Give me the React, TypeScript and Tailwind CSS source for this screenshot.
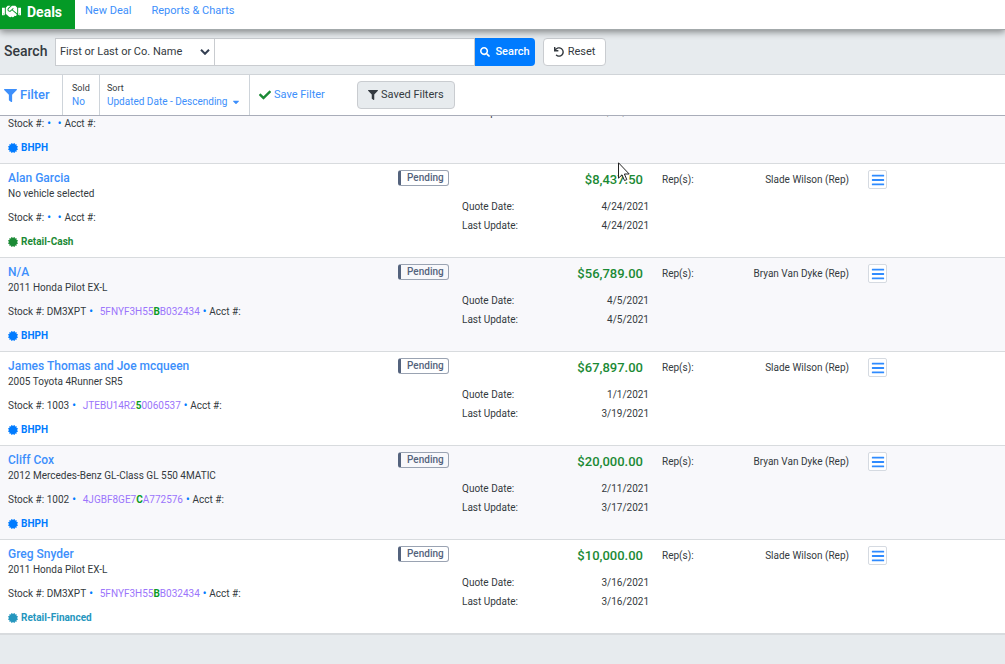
import { FaBars, FaCaretDown, FaCertificate, FaCheck, FaFilter, FaHandshake, FaSearch, FaUndo } from "react-icons/fa";

type Deal = {
    id: number;
    name: string;
    vehicle: string;
    stock: string;
    vin: string;
    type: "BHPH" | "Retail-Cash" | "Retail-Financed";
    amount: string;
    quoteDate?: string;
    lastUpdate: string;
    rep: string;
};

const deals: Deal[] = [
    { id: 1, name: "", vehicle: "", stock: "", vin: "", type: "BHPH", amount: "", lastUpdate: "4/29/2021", rep: "" },
    { id: 2, name: "Alan Garcia", vehicle: "No vehicle selected", stock: "", vin: "", type: "Retail-Cash", amount: "$8,437.50", quoteDate: "4/24/2021", lastUpdate: "4/24/2021", rep: "Slade Wilson (Rep)" },
    { id: 3, name: "N/A", vehicle: "2011 Honda Pilot EX-L", stock: "DM3XPT", vin: "5FNYF3H55BB032434", type: "BHPH", amount: "$56,789.00", quoteDate: "4/5/2021", lastUpdate: "4/5/2021", rep: "Bryan Van Dyke (Rep)" },
    { id: 4, name: "James Thomas and Joe mcqueen", vehicle: "2005 Toyota 4Runner SR5", stock: "1003", vin: "JTEBU14R250060537", type: "BHPH", amount: "$67,897.00", quoteDate: "1/1/2021", lastUpdate: "3/19/2021", rep: "Slade Wilson (Rep)" },
    { id: 5, name: "Cliff Cox", vehicle: "2012 Mercedes-Benz GL-Class GL 550 4MATIC", stock: "1002", vin: "4JGBF8GE7CA772576", type: "BHPH", amount: "$20,000.00", quoteDate: "2/11/2021", lastUpdate: "3/17/2021", rep: "Bryan Van Dyke (Rep)" },
    { id: 6, name: "Greg Snyder", vehicle: "2011 Honda Pilot EX-L", stock: "DM3XPT", vin: "5FNYF3H55BB032434", type: "Retail-Financed", amount: "$10,000.00", quoteDate: "3/16/2021", lastUpdate: "3/16/2021", rep: "Slade Wilson (Rep)" },
];

const typeColors = {
    BHPH: "text-[#007bff]",
    "Retail-Cash": "text-[#1b8a35]",
    "Retail-Financed": "text-[#2596be]",
};

function Dot() {
    return <span className="text-[#007bff] font-bold">•</span>;
}

// The tenth character of a VIN is the model year
function Vin({ vin }: { vin: string }) {
    return (
        <a href="#vin" className="text-[#9b75fb]">
            {vin.slice(0, 9)}
            <span className="font-bold text-[#0a9a26]">{vin.slice(9, 10)}</span>
            {vin.slice(10)}
        </a>
    );
}

function DealRow({ deal }: { deal: Deal }) {
    return (
        <li className="grid grid-cols-[390fr_64fr_200fr_206fr_137fr] items-start border-b border-[#d8dbde] bg-white pl-2 pt-[6px] pb-[7px] text-[10px] leading-4 odd:bg-[#f8f8fb]">
            <div>
                <h2 className="h-4 text-xs leading-4 font-medium text-[#3d8ffb]">
                    <a href="#deal">{deal.name}</a>
                </h2>
                <p className="h-4">{deal.vehicle}</p>
                <p className="mt-2 flex gap-[3px]">
                    <span>Stock #: {deal.stock}</span>
                    <Dot />
                    <span className="flex gap-[3px] pl-1">
                        {deal.vin && <Vin vin={deal.vin} />}
                        <Dot />
                    </span>
                    <span>Acct #:</span>
                </p>
                <p className={`mt-2 flex items-center gap-[3px] font-bold ${typeColors[deal.type]}`}>
                    <FaCertificate size={10} /> {deal.type}
                </p>
            </div>

            <div>
                <span className="block h-4 w-[51px] rounded-[3px] border border-l-3 border-[#9aa3b2] border-l-[#54637d] pl-[6px] leading-[14px] font-medium text-[#54637d]">
                    Pending
                </span>
            </div>

            <div className="pt-[2px] pr-[13px]">
                <p className="h-4 pr-[6px] text-right text-[13px] font-medium text-[#1b8a35]">{deal.amount}</p>
                <dl className="mt-[9px] leading-[19px]">
                    {deal.quoteDate && (
                        <div className="flex justify-between">
                            <dt>Quote Date:</dt>
                            <dd>{deal.quoteDate}</dd>
                        </div>
                    )}
                    <div className="flex justify-between">
                        <dt>Last Update:</dt>
                        <dd>{deal.lastUpdate}</dd>
                    </div>
                </dl>
            </div>

            <div className="flex justify-between pt-[2px] pr-[19px]">
                <span>Rep(s):</span>
                <span>{deal.rep}</span>
            </div>

            <div>
                <button aria-label="Deal menu" className="flex size-[19px] items-center justify-center rounded-xs border border-[#d5dae1] bg-white text-[#2f8bff]">
                    <FaBars size={14} />
                </button>
            </div>
        </li>
    );
}

export default function App() {
    return (
        <div className="relative min-h-screen overflow-hidden bg-[#e7ebee] font-['Roboto',sans-serif] text-[#343a40]">
            <header className="relative z-20 flex h-[30px] border-b border-[#a3a9ab] bg-white text-[11px] text-[#3d8ffb] shadow-[0_2px_7px_rgba(0,0,0,0.45)]">
                <a href="#deals" className="flex w-[75px] items-center gap-[6px] bg-[#049a26] pb-[6px] pl-[2px] text-sm font-bold text-white">
                    <FaHandshake size={19} /> Deals
                </a>
                <nav className="flex items-center gap-5 pb-[6px] pl-[10px]">
                    <a href="#new">New Deal</a>
                    <a href="#reports">Reports &amp; Charts</a>
                </nav>
            </header>

            <form className="relative z-10 flex h-11 items-start bg-[#e7ebee] pt-2 pl-1 text-[11px]">
                <label htmlFor="term" className="w-[51px] text-sm leading-[26px] font-medium">Search</label>
                <div className="relative">
                    <select aria-label="Search by" className="h-7 w-40 appearance-none border border-[#c9ccd0] bg-white pl-1">
                        <option>First or Last or Co. Name</option>
                    </select>
                    <svg viewBox="0 0 10 6" className="pointer-events-none absolute top-[11px] right-[5px] h-[6px] w-[10px] fill-none stroke-[#343f52] stroke-2">
                        <path d="M1 .8 5 4.8 9 .8" />
                    </svg>
                </div>
                <input id="term" type="text" className="-ml-px h-7 w-[261px] border border-[#c9ccd0] bg-white px-2" />
                <button type="button" className="flex h-7 w-[60px] items-center justify-center gap-[5px] rounded-r-sm bg-[#007bff] font-medium text-white">
                    <FaSearch size={10} /> Search
                </button>
                <button type="reset" className="ml-2 flex h-7 w-[63px] items-center justify-center gap-1 rounded-sm border border-[#c9ccd0] bg-white">
                    <FaUndo size={10} /> Reset
                </button>
            </form>

            <section className="relative z-10 flex h-[42px] border-y border-t-[#d0d4d8] border-b-[#a9adb9] bg-white text-[10px] text-[#3d8ffb]">
                <button className="flex w-[62px] items-center gap-[3px] pl-1 text-[13px] font-medium">
                    <FaFilter size={13} /> Filter
                </button>
                <button className="w-[37px] border-l border-[#ced4da] pl-[9px] text-left leading-[14px]">
                    <span className="block text-[9px] text-[#343a40]">Sold</span>
                    No
                </button>
                <button className="w-[151px] border-x border-[#ced4da] pl-[7px] text-left leading-[14px]">
                    <span className="block text-[9px] text-[#343a40]">Sort</span>
                    <span className="flex items-center gap-1">
                        Updated Date - Descending <FaCaretDown size={10} />
                    </span>
                </button>
                <button className="flex items-center gap-[3px] pl-[9px] text-[11px]">
                    <FaCheck size={12} className="text-[#1b8a35]" /> Save Filter
                </button>
                <button className="ml-8 flex h-7 w-[98px] items-center justify-center gap-[3px] self-center rounded-sm border border-[#c9ccd0] bg-[#e7ebee] text-[11px] text-[#343a40]">
                    <FaFilter size={10} /> Saved Filters
                </button>
            </section>

            <ul className="-mt-[46px] border-b border-[#d8dbde]">
                {deals.map((deal) => (
                    <DealRow key={deal.id} deal={deal} />
                ))}
            </ul>

            {/* Mouse pointer */}
            <svg viewBox="0 0 12 20" className="absolute top-[162px] left-[618px] z-30 h-5 w-3 fill-white stroke-[#222]">
                <path d="M.5 .8V16.2L4 12.8 6.5 18.6 8.8 17.6 6.4 12H11.2Z" />
            </svg>
        </div>
    );
}
